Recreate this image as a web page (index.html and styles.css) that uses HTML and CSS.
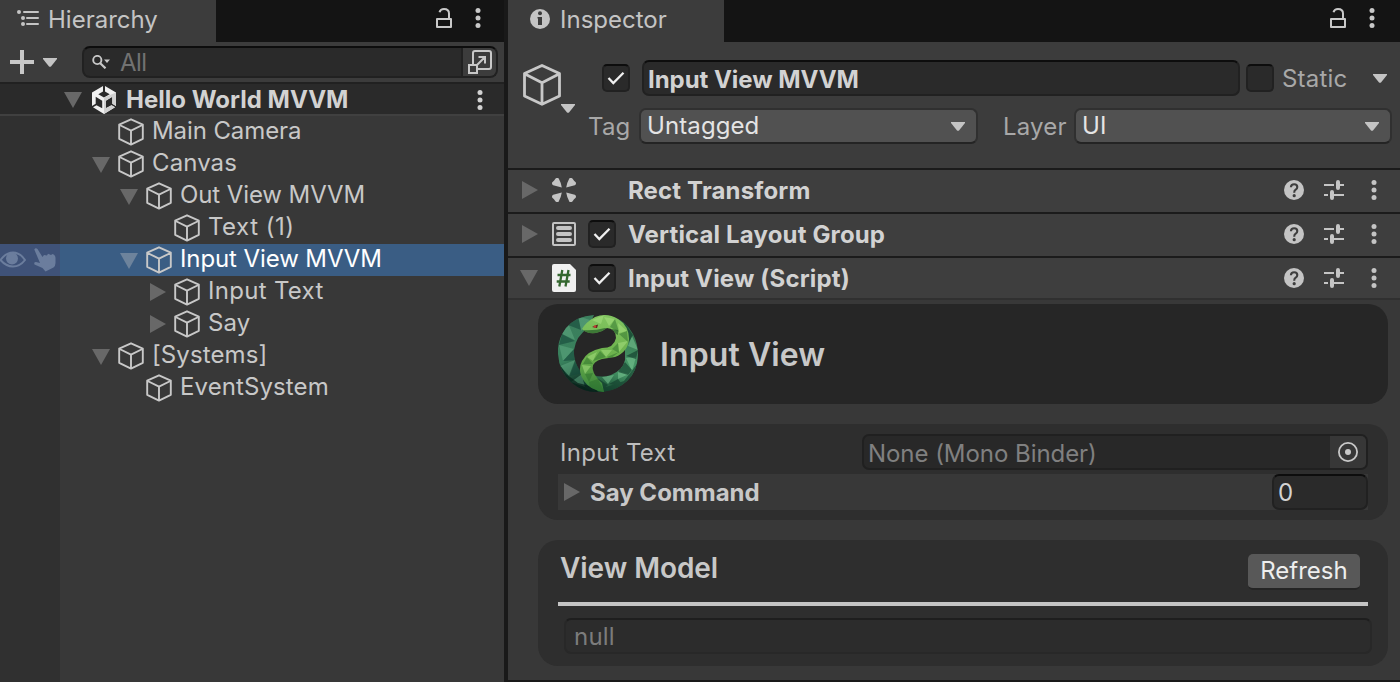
FILE: index.html
```html
<!DOCTYPE html>
<html lang="en">
<head>
<meta charset="utf-8">
<title>Hello World MVVM</title>
<link rel="stylesheet" href="styles.css">
</head>
<body>
<svg class="defs" aria-hidden="true">
  <symbol id="cube" viewBox="0 0 26 28"><path d="M13 1.3 24.8 6.6V20.8L13 26.6 1.2 20.8V6.6ZM1.6 7 13 12.6 24.4 7M13 12.6V26.4" fill="none" stroke="currentColor" stroke-width="1.9" stroke-linejoin="round"/></symbol>
  <symbol id="down" viewBox="0 0 18 16"><path d="M0 0H18L9 16Z" fill="currentColor"/></symbol>
  <symbol id="right" viewBox="0 0 16 18"><path d="M0 0V18L16 9Z" fill="currentColor"/></symbol>
  <symbol id="caret" viewBox="0 0 14 9"><path d="M0 0H14V1L8 8.4Q7 9.2 6 8.4L0 1Z" fill="currentColor"/></symbol>
  <symbol id="dots" viewBox="0 0 6 20"><g fill="currentColor"><circle cx="3" cy="2.5" r="2.5"/><circle cx="3" cy="10" r="2.5"/><circle cx="3" cy="17.5" r="2.5"/></g></symbol>
  <symbol id="lock" viewBox="0 0 16 20"><path d="M1 11H15V19H1ZM3.500 4.200Q4.500 1 8 1Q13 1 13 5.500V11" fill="none" stroke="currentColor" stroke-width="2" stroke-linejoin="round"/></symbol>
  <symbol id="check" viewBox="0 0 18 14"><path d="M1.500 7 6.300 12 16.500 1.700" fill="none" stroke="currentColor" stroke-width="2.300"/></symbol>
  <symbol id="help" viewBox="0 0 20 20"><circle cx="10" cy="10" r="10" fill="currentColor"/><path d="M6.900 7.300Q7 4.200 10.200 4.200Q13.300 4.200 13.300 7Q13.300 8.700 11.700 9.700Q10.200 10.600 10.200 12.700" fill="none" stroke="#3e3e3e" stroke-width="2.100"/><circle cx="10.200" cy="15.700" r="1.600" fill="#3e3e3e"/></symbol>
  <symbol id="preset" viewBox="0 0 20 20"><path d="M0 5H10M18 5H20M0 15H4M12 15H20" stroke="currentColor" stroke-width="2"/><path d="M14 2V8M8 12V18" stroke="currentColor" stroke-width="4" stroke-linecap="round"/><path d="M16 5H18M10 15H12" stroke="currentColor" stroke-width="2"/></symbol>
</svg>
<div class="editor">
  <section class="hierarchy">
    <header class="tabbar">
      <div class="tab">
        <svg class="tab-list" width="22" height="16" viewBox="0 0 22 16"><path d="M7 2H21M10 8H21M10 14H21" stroke="currentColor" stroke-width="2" stroke-linecap="round"/><g fill="currentColor"><circle cx="2" cy="2" r="2"/><circle cx="6" cy="8" r="2"/><circle cx="6" cy="14" r="2"/></g></svg>
        <span class="t-hier">Hierarchy</span>
      </div>
      <div class="tab-tools"><svg class="i-lock"><use href="#lock"/></svg><svg class="i-dots"><use href="#dots"/></svg></div>
    </header>
    <div class="toolbar">
      <svg class="plus" width="24" height="24" viewBox="0 0 24 24"><path d="M12 0V24M0 12H24" stroke="currentColor" stroke-width="4"/></svg>
      <svg class="i-caret plus-caret"><use href="#caret"/></svg>
      <div class="search">
        <svg class="mag" width="18" height="14" viewBox="0 0 18 14"><circle cx="5.300" cy="5" r="4.100" fill="none" stroke="currentColor" stroke-width="1.900"/><path d="M8 8 13.500 13.300" stroke="currentColor" stroke-width="2.200"/><path d="M12 4.500H18L15 8Z" fill="currentColor"/></svg>
        <span class="search-text">All</span>
        <div class="popout"><svg width="24" height="24" viewBox="0 0 24 24"><path d="M5 14V3Q5 1 7 1H21Q23 1 23 3V17Q23 19 21 19H10M1 15H9V23H1ZM9 15 17 7M10.500 7H17V13.500" fill="none" stroke="currentColor" stroke-width="2"/></svg></div>
      </div>
    </div>
    <div class="scene">
      <svg class="i-down"><use href="#down"/></svg>
      <svg class="unity" width="24" height="28" viewBox="0 0 24 28"><path d="M11 0V5.500L6.300 8.200 12 11.500 17.700 8.200 13 5.500V0L24 6.500V20L20.300 17.800V10.800L13.800 14.800V22.300L19.500 19.200 23 21.300 12 28 1 21.300 4.500 19.200 10.200 22.300V14.800L3.700 10.800V17.800L0 20V6.500Z" fill="#f0f0f0"/><path d="M24 6.500V20L20.300 17.800V10.800L13.800 14.800V22.300L19.500 19.200 23 21.300 12 28V11.500Z" fill="#d0d0d0"/></svg>
      <b class="t-scene">Hello World MVVM</b>
      <svg class="i-dots"><use href="#dots"/></svg>
    </div>
    <ul class="tree">
      <li class="node l1"><span class="gutter"></span><span class="fold"></span><svg class="i-cube"><use href="#cube"/></svg><span class="tight">Main Camera</span></li>
      <li class="node l1"><span class="gutter"></span><span class="fold"><svg class="i-down"><use href="#down"/></svg></span><svg class="i-cube"><use href="#cube"/></svg><span class="snug">Canvas</span></li>
      <li class="node l2"><span class="gutter"></span><span class="fold"><svg class="i-down"><use href="#down"/></svg></span><svg class="i-cube"><use href="#cube"/></svg><span class="tight">Out View MVVM</span></li>
      <li class="node l3"><span class="gutter"></span><span class="fold"></span><svg class="i-cube"><use href="#cube"/></svg><span class="wide">Text (1)</span></li>
      <li class="node l2 selected"><span class="gutter"><svg width="26" height="18" viewBox="0 0 26 18"><path d="M.5 9Q6 1.500 13 1.500T25 9Q20 15.500 13 15.500T.5 9Z" fill="none" stroke="currentColor" stroke-width="2"/><circle cx="12" cy="7.500" r="6" fill="currentColor"/></svg><svg width="22" height="24" viewBox="0 0 22 24"><path d="M.3 1.500Q1.500-.5 3.500 1L8.500 9 10 7 13 7.500 14 5.800 17 7 18.500 6Q21.500 7 21.500 10V15Q21.500 18 19.500 19.500L11.500 23.500 8.500 20 .5 16.500Q-.5 14 2 14L6 15Z" fill="currentColor"/></svg></span><span class="fold"><svg class="i-down"><use href="#down"/></svg></span><svg class="i-cube"><use href="#cube"/></svg><span class="tight">Input View MVVM</span></li>
      <li class="node l3"><span class="gutter"></span><span class="fold"><svg class="i-right"><use href="#right"/></svg></span><svg class="i-cube"><use href="#cube"/></svg><span class="normal">Input Text</span></li>
      <li class="node l3"><span class="gutter"></span><span class="fold"><svg class="i-right"><use href="#right"/></svg></span><svg class="i-cube"><use href="#cube"/></svg><span class="snug">Say</span></li>
      <li class="node l1"><span class="gutter"></span><span class="fold"><svg class="i-down"><use href="#down"/></svg></span><svg class="i-cube"><use href="#cube"/></svg><span class="snug">[Systems]</span></li>
      <li class="node l2"><span class="gutter"></span><span class="fold"></span><svg class="i-cube"><use href="#cube"/></svg><span class="snug">EventSystem</span></li>
    </ul>
  </section>

  <section class="inspector">
    <header class="tabbar">
      <div class="tab tab-insp">
        <svg class="info" width="20" height="20" viewBox="0 0 20 20"><circle cx="10" cy="10" r="10" fill="currentColor"/><circle cx="10" cy="4.300" r="2" fill="#3c3c3c"/><path d="M7.500 8H12V16H8V9.500H7.500Z" fill="#3c3c3c"/></svg>
        <span class="t-insp">Inspector</span>
      </div>
      <div class="tab-tools"><svg class="i-lock"><use href="#lock"/></svg><svg class="i-dots"><use href="#dots"/></svg></div>
    </header>
    <div class="object">
      <div class="object-icon"><svg class="big-cube" width="40" height="42" viewBox="0 0 40 42"><path d="M20 1.500 37.500 9.500V32L20 40.300 2.500 32V9.500ZM3 10 20 18.800 37 10M20 18.800V40" fill="none" stroke="currentColor" stroke-width="2.800" stroke-linejoin="round"/></svg><svg class="i-caret"><use href="#caret"/></svg></div>
      <div class="object-fields">
        <div class="name-row">
          <span class="box"><svg class="i-check"><use href="#check"/></svg></span>
          <div class="input name"><b class="t-name">Input View MVVM</b></div>
          <span class="box"></span>
          <span class="label t-static">Static</span>
          <svg class="i-caret"><use href="#caret"/></svg>
        </div>
        <div class="tag-row">
          <span class="label t-tag">Tag</span>
          <div class="select tag-select"><span class="t-untag">Untagged</span><svg class="i-caret"><use href="#caret"/></svg></div>
          <span class="label t-layer">Layer</span>
          <div class="select layer-select"><span>UI</span><svg class="i-caret"><use href="#caret"/></svg></div>
        </div>
      </div>
    </div>
    <div class="component">
      <span class="cfold"><svg class="i-right"><use href="#right"/></svg></span>
      <svg width="24" height="24" viewBox="0 0 24 24"><path id="blade" d="M9.800 9.600 1.200 7.200Q-.6 6 .3 4.300Q2.200 3 3.200 1Q4.800-.8 6.600 .3Q9 4.500 9.800 9.600Z" fill="currentColor"/><use href="#blade" transform="matrix(-1 0 0 1 24 0)"/><use href="#blade" transform="matrix(1 0 0 -1 0 24)"/><use href="#blade" transform="matrix(-1 0 0 -1 24 24)"/></svg>
      <span class="box-space"></span><b>Rect Transform</b>
      <span class="actions"><svg class="i-20"><use href="#help"/></svg><svg class="i-20"><use href="#preset"/></svg><svg class="i-dots"><use href="#dots"/></svg></span>
    </div>
    <div class="component">
      <span class="cfold"><svg class="i-right"><use href="#right"/></svg></span>
      <svg width="24" height="24" viewBox="0 0 24 24"><rect x="1" y="1" width="22" height="22" rx="1" fill="none" stroke="currentColor" stroke-width="2"/><path d="M6 6H18M6 12H18M6 18H18" stroke="currentColor" stroke-width="4" stroke-linecap="round"/></svg>
      <span class="box"><svg class="i-check"><use href="#check"/></svg></span><b>Vertical Layout Group</b>
      <span class="actions"><svg class="i-20"><use href="#help"/></svg><svg class="i-20"><use href="#preset"/></svg><svg class="i-dots"><use href="#dots"/></svg></span>
    </div>
    <div class="component last">
      <span class="cfold"><svg class="i-down"><use href="#down"/></svg></span>
      <svg width="24" height="28" viewBox="0 0 24 28"><path d="M2 0H18L24 6V26Q24 28 22 28H2Q0 28 0 26V2Q0 0 2 0Z" fill="#f0f0f0"/><path d="M10.300 6 7.300 22.500M16.500 6 13.500 22.500M5.500 11H18.500M4.700 17.500H17.700" stroke="#34672f" stroke-width="2.300"/></svg>
      <span class="box"><svg class="i-check"><use href="#check"/></svg></span><b>Input View (Script)</b>
      <span class="actions"><svg class="i-20"><use href="#help"/></svg><svg class="i-20"><use href="#preset"/></svg><svg class="i-dots"><use href="#dots"/></svg></span>
    </div>
    <div class="body">
      <div class="card hero">
        <svg class="snake" width="80" height="80" viewBox="0 0 80 80">
          <defs>
            <linearGradient id="ring" x1="0" y1="0" x2=".25" y2="1"><stop offset="0" stop-color="#3d7f5e"/><stop offset=".6" stop-color="#38805c"/><stop offset="1" stop-color="#0b2a21"/></linearGradient>
            <linearGradient id="ring-right" x1=".5" y1="0" x2=".3" y2="1"><stop offset="0" stop-color="#2f6d49"/><stop offset=".65" stop-color="#4a9c6b"/><stop offset="1" stop-color="#174a30"/></linearGradient>
            <linearGradient id="bodyg" x1="0" y1="0" x2="0" y2="1"><stop offset="0" stop-color="#82c560"/><stop offset=".55" stop-color="#6bb04b"/><stop offset="1" stop-color="#35803a"/></linearGradient>
            <clipPath id="cl"><path id="pl" d="M36 1Q18 2 8 14Q-1 26 0 40Q1 58 14 69Q26 79 42 78L30 68 22 57Q15 46 16 36Q18 22 30 14Z"/></clipPath>
            <clipPath id="cr"><path id="pr" d="M55 3Q68 7 75 20Q82 34 79 49Q76 63 64 71Q54 78 40 78L35 61Q44 64 53 61Q65 56 67 46L67 34 70 22Z"/></clipPath>
            <clipPath id="cb"><path id="pb" d="M24 15Q28 8 37 3Q49-2 60 5Q71 12 71 25Q70 38 57 43L44 45Q33 48 35 56Q36 62 44 69L46 78Q32 76 26 67Q19 57 24 47Q29 37 44 34Q56 34 58 24Q58 15 49 14Q44 18 38 19Q28 20 24 15Z"/></clipPath>
          </defs>
          <use href="#pl" fill="url(#ring)"/>
          <g clip-path="url(#cl)">
            <path d="M10 9 17 26 4 20ZM1 31 16 35 5 47ZM2 52 17 46 11 62ZM13 68 24 60 27 73ZM20 2 32 6 23 17Z" fill="#62ac84" opacity=".5"/>
            <path d="M20 2 23 16 10 11ZM4 20 17 27 1 31ZM16 35 19 46 5 47ZM2 52 11 62 4 64ZM17 47 25 59 12 62ZM24 61 38 78 27 74Z" fill="#16483a" opacity=".6"/>
            <path d="M0 48 8 60 20 69 36 73 42 80H0Z" fill="#08211a" opacity=".75"/>
          </g>
          <use href="#pr" fill="url(#ring-right)"/>
          <g clip-path="url(#cr)">
            <path d="M74 22 80 36 70 32ZM68 44 78 43 74 57ZM60 57 71 60 60 65ZM44 63 56 61 50 70Z" fill="#80cc98" opacity=".5"/>
            <path d="M66 8 75 21 69 31ZM80 36 78 45 68 42ZM74 56 67 48 60 58 70 61ZM60 65 66 73 51 70ZM39 64 50 71 39 80ZM42 75 66 67 79 50V79H42Z" fill="#123d2c" opacity=".65"/>
          </g>
          <use href="#pb" fill="url(#bodyg)"/>
          <g clip-path="url(#cb)">
            <path d="M34 6 46 1 43 10ZM46 3 57 5 51 12ZM60 9 69 17 61 19ZM60 29 70 27 61 38ZM43 36 54 36 48 43ZM29 43 39 38 35 47ZM24 51 33 52 27 60Z" fill="#aae281" opacity=".5"/>
            <path d="M57 5 61 18 52 13ZM69 17 70 28 61 20ZM60 29 61 39 54 35ZM48 43 42 37 35 47ZM61 38 52 45 49 43ZM29 43 35 50 25 50ZM27 60 35 59 31 68ZM31 68 40 65 47 79 32 76Z" fill="#286b2b" opacity=".45"/>
            <path d="M24 16Q36 17 47 14L60 16V21L49 15 40 19 26 20Z" fill="#1d5425" opacity=".65"/>
          </g>
          <path d="M34 13 40 10.500 39 14Z" fill="#5c191b"/><circle cx="37" cy="12.500" r="1.300" fill="#c53c32"/>
        </svg>
        <b class="t-hero">Input View</b>
      </div>
      <div class="card binding">
        <div class="field-row"><span class="t-label">Input Text</span><div class="objfield"><span class="t-none">None (Mono Binder)</span><span class="picker"><svg width="20" height="20" viewBox="0 0 20 20"><circle cx="10" cy="10" r="9.100" fill="none" stroke="currentColor" stroke-width="1.800"/><circle cx="10" cy="10" r="3" fill="currentColor"/></svg></span></div></div>
        <div class="say-row"><svg class="i-right"><use href="#right"/></svg><b class="t-say">Say Command</b><div class="input num"><span>0</span></div></div>
      </div>
      <div class="card model">
        <div class="model-head"><b class="t-vm">View Model</b><button class="refresh"><span>Refresh</span></button></div>
        <div class="rule"></div>
        <div class="input nullbox"><span class="t-null">null</span></div>
      </div>
    </div>
  </section>
</div>
</body>
</html>
```

FILE: styles.css
```css
* { box-sizing: border-box; }
body { margin: 0; font-family: Inter, "Liberation Sans", sans-serif; font-size: 24px; line-height: 30px; letter-spacing: 0.2px; color: #c8c8c8; background: #191919; overflow: hidden; }
b { font-weight: 700; letter-spacing: 0; }
svg { display: block; flex: none; }
span, b { white-space: nowrap; }
.defs { position: absolute; width: 0; height: 0; }
.editor { display: grid; grid-template-columns: 504px 892px; column-gap: 4px; height: 682px; }

.i-cube { width: 26px; height: 28px; color: #c8c8c8; }
.i-down { width: 18px; height: 16px; color: #686868; }
.i-right { width: 16px; height: 18px; color: #686868; }
.i-caret { width: 14px; height: 9px; color: #c4c4c4; }
.i-dots { width: 6px; height: 20px; }
.i-lock { width: 16px; height: 20px; }
.i-check { width: 18px; height: 14px; color: #f0f0f0; }
.i-20 { width: 20px; height: 20px; }

.tight { letter-spacing: -0.1px; }
.snug { letter-spacing: 0.1px; }
.normal { letter-spacing: 0.3px; }
.wide { letter-spacing: 0.5px; }

.tabbar { display: flex; justify-content: space-between; height: 42px; background: #141414; }
.tab { display: flex; align-items: center; width: 216px; height: 42px; padding: 0 0 4px 17px; gap: 9px; background: #3c3c3c; color: #c4c4c4; }
.tab span { padding-top: 2px; letter-spacing: 0; }
.tab-insp { padding-left: 22px; gap: 10px; }
.tab-list { margin-bottom: 2px; }
.tab-tools { display: flex; align-items: center; gap: 23px; padding: 0 23px 6px 0; }
.inspector .tab-tools { padding-right: 25px; }

.hierarchy { background: #383838; }
.toolbar { display: flex; align-items: center; height: 42px; padding-left: 10px; background: #3c3c3c; border-bottom: 2px solid #212121; }
.plus-caret { margin: 0 25px 0 9px; }
.search { display: flex; align-items: center; width: 416px; height: 32px; padding-left: 8px; background: #2a2a2a; border: 2px solid #212121; border-top-color: #0d0d0d; border-radius: 8px; overflow: hidden; }
.search-text { margin-left: 10px; padding-top: 2px; letter-spacing: -0.5px; color: #727272; }
.popout { display: grid; place-items: center; width: 35px; height: 28px; margin-left: auto; background: #3c3c3c; border-left: 2px solid #212121; }
.scene { display: flex; align-items: center; height: 32px; padding: 0 21px 0 64px; background: #2a2a2a; border-bottom: 2px solid #404040; color: #d2d2d2; }
.scene .i-down { margin-top: 2px; }
.scene .unity { margin: 1px 10px 0; }
.scene b { padding-top: 1px; letter-spacing: 0; }
.scene .i-dots { margin: 2px 0 0 auto; }

.tree { list-style: none; margin: 0; padding: 0; height: 566px; background: linear-gradient(to right, #303030 60px, #383838 60px); }
.node { display: flex; align-items: center; height: 32px; }
.gutter { display: flex; align-items: center; justify-content: space-between; width: 60px; height: 32px; padding-right: 4px; color: #6b7d9d; }
.fold { width: 26px; }
.fold svg { margin-top: 1px; }
.l1 .fold { margin-left: 32px; }
.l2 .fold { margin-left: 60px; }
.l3 .fold { margin-left: 88px; }
.fold .i-right { margin: 0 0 0 2px; }
.node .i-cube + span { margin: 0 0 2px 8px; }
.selected { background: #3a5d84; color: #fff; }
.selected .gutter { background: #3f5278; }
.selected .i-down { color: #6d839c; }

.inspector { height: 680px; background: #383838; }
.object { display: flex; height: 128px; padding: 18px 8px 0 14px; background: #3c3c3c; border-bottom: 2px solid #1b1b1b; }
.object-icon { width: 54px; padding-top: 4px; }
.object-icon .i-caret { margin: -2px 0 0 39px; }
.object-fields { display: flex; flex-direction: column; gap: 12px; }
.name-row { display: flex; align-items: center; padding-left: 26px; }
.box { display: grid; place-items: center; flex: none; width: 28px; height: 28px; background: #2a2a2a; border: 2px solid #212121; border-top-color: #0d0d0d; border-radius: 5px; }
.input { display: flex; align-items: center; height: 36px; padding: 2px 0 0 4px; background: #2a2a2a; border: 2px solid #212121; border-top-color: #0d0d0d; border-radius: 7px; color: #d2d2d2; }
.name { width: 598px; margin: 0 6px 0 12px; }
.name b { padding-top: 1px; letter-spacing: -0.05px; }
.label { color: #a8a8a8; }
.name-row .label { width: 91px; margin-left: 8px; padding-top: 1px; }
.tag-row { display: flex; align-items: center; padding-left: 12px; }
.tag-row .t-tag { width: 51px; padding-top: 1px; }
.tag-row .t-layer { width: 71px; margin-left: 25px; padding-top: 1px; }
.select { display: flex; align-items: center; justify-content: space-between; height: 36px; padding: 0 11px 0 6px; background: #515151; border: 2px solid #303030; border-bottom-color: #242424; border-radius: 7px; color: #e4e4e4; }
.t-untag { letter-spacing: 0.1px; }
.tag-select { width: 339px; }
.layer-select { width: 318px; }

.component { display: flex; align-items: center; height: 44px; padding: 0 23px 2px 14px; background: #3e3e3e; border-bottom: 2px solid #1b1b1b; color: #d2d2d2; }
.component.last { height: 42px; padding-bottom: 0; border-bottom-color: #303030; }
.component > svg { margin-right: 12px; color: #c4c4c4; }
.component b { margin-left: 12px; padding-top: 1px; letter-spacing: 0.15px; }
.cfold { width: 30px; }
.cfold .i-down { margin-left: -2px; }
.box-space { width: 28px; }
.actions { display: flex; align-items: center; gap: 20px; margin-left: auto; color: #c4c4c4; }
.actions .i-dots { margin-left: 7px; }

.body { display: flex; flex-direction: column; gap: 20px; padding: 4px 12px 0 30px; }
.card { border-radius: 20px; background: #2e2e2e; color: #c8c8c8; }
.hero { display: flex; align-items: center; height: 100px; padding-left: 20px; gap: 22px; background: #262626; }
.t-hero { padding-top: 2px; font-size: 32px; font-weight: 600; letter-spacing: 0.1px; }
.binding { height: 96px; padding: 10px 20px; }
.field-row { display: flex; align-items: center; justify-content: space-between; margin-bottom: 4px; }
.t-label { margin-left: 2px; padding-top: 1px; letter-spacing: 0.3px; color: #bdbdbd; }
.objfield { display: flex; align-items: center; width: 506px; height: 36px; padding-left: 4px; background: #282828; border: 2px solid #202020; border-radius: 7px; color: #808080; }
.t-none { padding-top: 3px; letter-spacing: -0.05px; }
.picker { display: grid; place-items: center; width: 36px; height: 32px; margin-left: auto; background: #373737; border-radius: 0 5px 5px 0; color: #c8c8c8; }
.say-row { display: flex; align-items: center; height: 36px; padding-left: 6px; background: #383838; }
.t-say { margin-left: 10px; padding-top: 1px; letter-spacing: 0; }
.num { width: 96px; margin-left: auto; }
.model { height: 126px; padding: 14px 16px 0 20px; }
.model-head { display: flex; justify-content: space-between; height: 48px; padding: 0 12px 0 2px; }
.t-vm { font-size: 28px; font-weight: 600; line-height: 28px; letter-spacing: -0.05px; }
.refresh { width: 112px; height: 36px; padding: 0; border: 0; border-bottom: 2px solid #242424; border-radius: 5px; background: #585858; color: #eee; font: inherit; letter-spacing: 0; }
.rule { width: 810px; height: 4px; background: #c4c4c4; }
.nullbox { width: 808px; margin: 12px 0 0 6px; padding-left: 8px; background: #2c2c2c; border-color: #282828; border-top-color: #1e1e1e; color: #7c7c7c; }
```
